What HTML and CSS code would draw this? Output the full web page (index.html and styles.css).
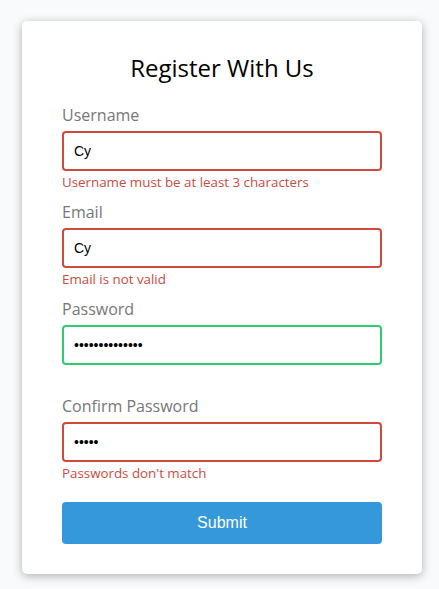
FILE: index.html
```html
<!DOCTYPE html>
<html lang="en">
<head>
<meta charset="UTF-8">
<title>Form Validator</title>
<link rel="stylesheet" href="styles.css">
</head>
<body>
<div class="container">
  <form class="form">
    <h2 class="title">Register With Us</h2>
    <div class="form-control error">
      <label class="label" for="username">Username</label>
      <input class="input" type="text" id="username" value="Cy">
      <small class="msg">Username must be at least 3 characters</small>
    </div>
    <div class="form-control error">
      <label class="label" for="email">Email</label>
      <input class="input" type="text" id="email" value="Cy">
      <small class="msg">Email is not valid</small>
    </div>
    <div class="form-control success">
      <label class="label" for="password">Password</label>
      <input class="input" type="password" id="password" value="abcdefghijklmn">
    </div>
    <div class="form-control error">
      <label class="label" for="password2">Confirm Password</label>
      <input class="input" type="password" id="password2" value="abcde">
      <small class="msg">Passwords don't match</small>
    </div>
    <button class="submit" type="button">Submit</button>
  </form>
</div>
</body>
</html>
```
FILE: styles.css
```css
* {
  box-sizing: border-box;
}

body {
  margin: 0;
  padding: 21px 0 0 22px;
  background-color: #f9fafb;
  font-family: "Open Sans", "DejaVu Sans", sans-serif;
  min-height: 100vh;
}

.container {
  width: 400px;
  background-color: #fff;
  border-radius: 5px;
  box-shadow: 0 2px 10px rgba(0, 0, 0, 0.3);
}

.form {
  padding: 30px 40px;
}

.title {
  text-align: center;
  margin: 0 0 20px;
  font-size: 24px;
  font-weight: 500;
  color: #000;
}

.form-control {
  margin-bottom: 10px;
  padding-bottom: 20px;
  position: relative;
}

.label {
  color: #777;
  display: block;
  margin-bottom: 5px;
  font-size: 16px;
}

.input {
  border: 2px solid #f0f0f0;
  border-radius: 4px;
  display: block;
  width: 100%;
  padding: 10px;
  font-size: 14px;
  font-family: "Liberation Sans", Arial, sans-serif;
  color: #000;
  outline: none;
}

.success .input {
  border-color: #2ecc71;
}

.error .input {
  border-color: #d2493c;
}

.msg {
  color: #cf4a3e;
  position: absolute;
  bottom: 0;
  left: 0;
  font-size: 13.333px;
}

.submit {
  cursor: pointer;
  background-color: #3498db;
  border: 2px solid #3498db;
  border-radius: 4px;
  color: #fff;
  display: block;
  font-size: 16px;
  font-family: "Liberation Sans", Arial, sans-serif;
  padding: 10px;
  margin-top: 20px;
  width: 100%;
}
```
